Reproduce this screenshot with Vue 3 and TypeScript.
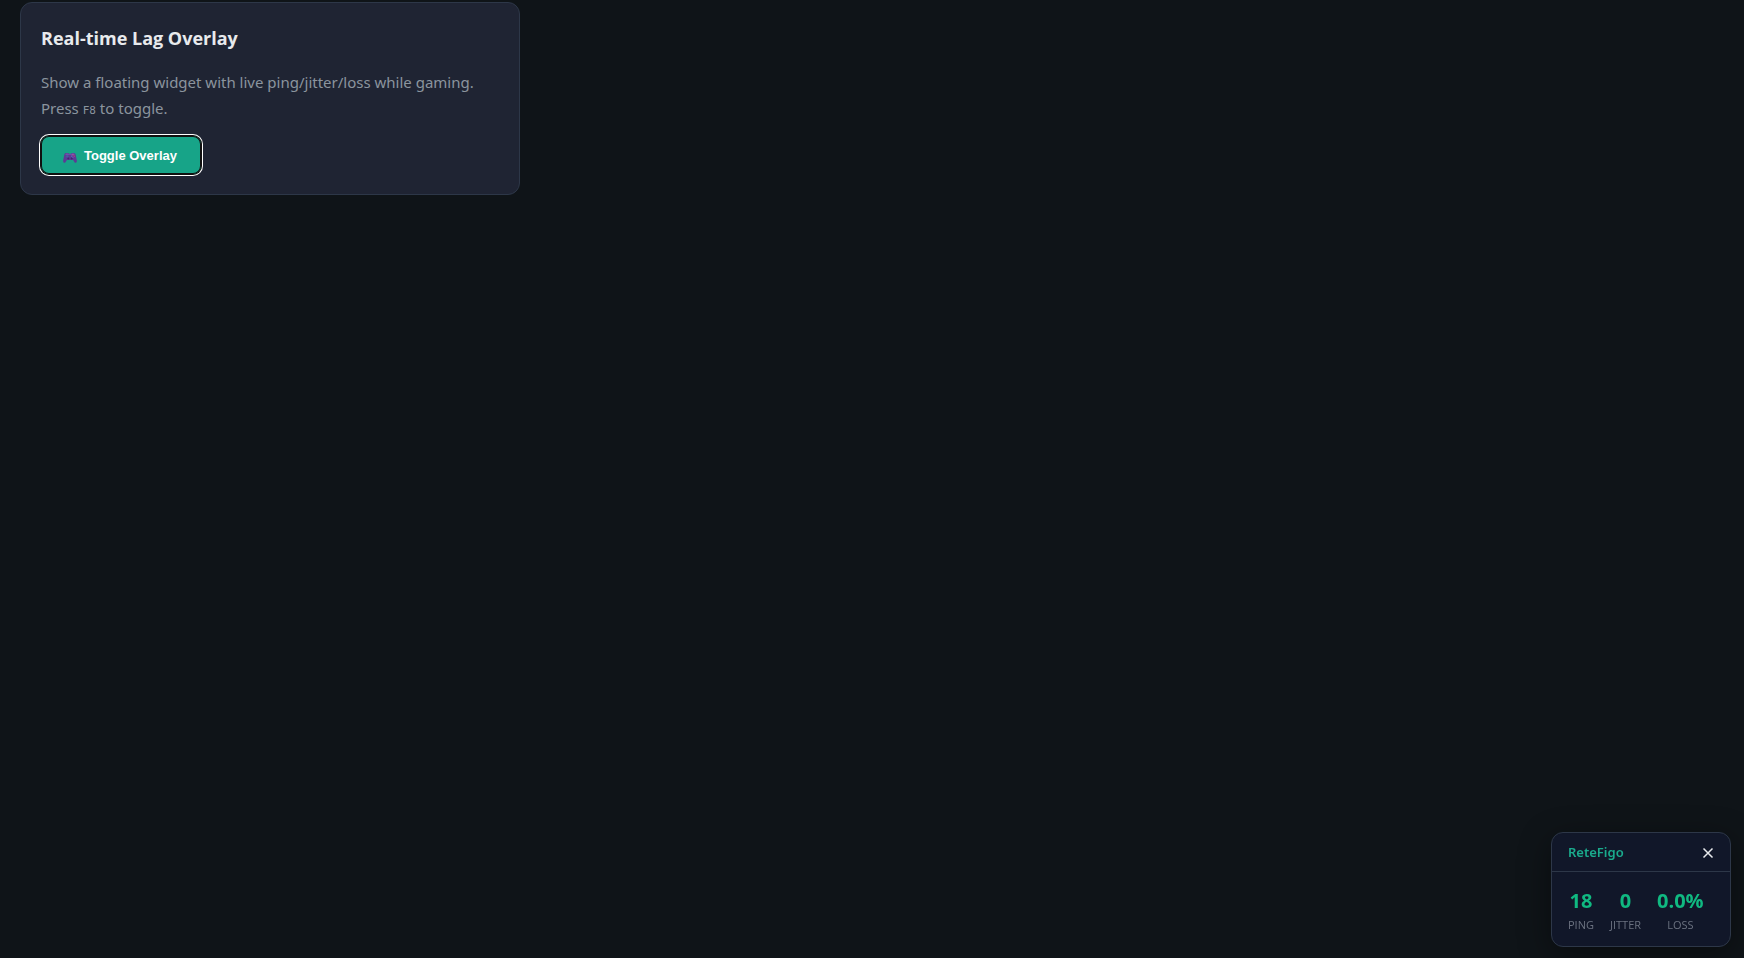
<script setup lang="ts">
import { ref, onMounted, onUnmounted } from 'vue'

interface Metric {
  label: string
  value: string
}

const visible = ref(true)
const metrics: Metric[] = [
  { label: 'PING', value: '18' },
  { label: 'JITTER', value: '0' },
  { label: 'LOSS', value: '0.0%' },
]

function toggle(): void {
  visible.value = !visible.value
}

function onKey(event: KeyboardEvent): void {
  if (event.key === 'F8') toggle()
}

onMounted(() => window.addEventListener('keydown', onKey))
onUnmounted(() => window.removeEventListener('keydown', onKey))
</script>

<template>
  <main class="page">
    <section class="card">
      <h3 class="title">Real-time Lag Overlay</h3>
      <p class="text">
        Show a floating widget with live ping/jitter/loss while gaming.<br />
        Press <kbd class="key">F8</kbd> to toggle.
      </p>
      <button class="toggle" type="button" @click="toggle">
        <svg class="pad" viewBox="0 0 14 12" aria-hidden="true">
          <path
            d="M3 1h2.2l.8.8h2l.8-.8H11c1 0 1.4.7 1.700 1.800l1.100 5.500c.2 1.300-.2 2.300-1 2.400-.8.1-1.300-.5-1.800-1.300L10.200 8H3.800L3 9.400c-.5.8-1 1.400-1.800 1.300-.8-.1-1.200-1.100-1-2.400l1.100-5.500C1.600 1.700 2 1 3 1z"
            fill="#5d3a96"
          />
          <path d="M3 1.500h2l.8.8h2.400l.8-.8h2l.8 1.500H2.200z" fill="#7550ac" />
          <path d="M3.700 2.800h1v1h1v1h-1v1h-1v-1h-1v-1h1z" fill="#46619f" />
          <circle cx="5.300" cy="6.500" r="1" fill="#3c2a70" />
          <circle cx="8.700" cy="6.500" r="1" fill="#3c2a70" />
          <circle cx="9.900" cy="2.900" r=".6" fill="#d05a86" />
          <circle cx="11.300" cy="4.100" r=".6" fill="#e0455e" />
          <circle cx="8.700" cy="4.100" r=".6" fill="#4b8fd0" />
          <circle cx="9.900" cy="5.200" r=".6" fill="#7c5cc0" />
        </svg>
        <span>Toggle Overlay</span>
      </button>
    </section>

    <aside v-if="visible" class="overlay" aria-label="Live connection stats">
      <header class="head">
        <span class="brand">ReteFigo</span>
        <button class="close" type="button" aria-label="Close" @click="visible = false">
          <svg class="cross" viewBox="0 0 12 12" aria-hidden="true">
            <path d="M1.500 1.500l9 9M10.500 1.500l-9 9" fill="none" stroke="currentColor" stroke-width="1.500" />
          </svg>
        </button>
      </header>
      <div class="stats">
        <div v-for="metric in metrics" :key="metric.label" class="stat">
          <span class="value">{{ metric.value }}</span>
          <span class="label">{{ metric.label }}</span>
        </div>
      </div>
    </aside>
  </main>
</template>

<style>
html {
  background: #0f1418;
}
body {
  margin: 0;
}
</style>

<style scoped>
.page {
  box-sizing: border-box;
  min-height: 100vh;
  padding: 2px 20px 20px;
  background: #0f1418;
  font-family: 'Segoe UI', 'Open Sans', 'Noto Sans', sans-serif;
}
.card {
  box-sizing: border-box;
  max-width: 500px;
  padding: 20px;
  border: 1px solid #2d3748;
  border-radius: 12px;
  background: #1f2433;
}
.title {
  margin: 0 0 16px;
  color: #e8eaed;
  font-size: 18px;
  font-weight: 700;
  line-height: 30px;
}
.text {
  margin: 0 0 15px;
  color: #8b949e;
  font-family: 'Segoe UI', 'Noto Sans', sans-serif;
  font-size: 15px;
  line-height: 26px;
}
.key {
  font-family: 'DejaVu Sans Mono', monospace;
  font-size: 11px;
  line-height: 12px;
}
.toggle {
  display: flex;
  align-items: center;
  gap: 7px;
  height: 38px;
  padding: 2px 24px 0 22px;
  border: 0;
  border-radius: 8px;
  background: #17a488;
  box-shadow: inset 0 0 0 1px #101010, 0 0 0 1px #101010, 0 0 0 2px #fff;
  color: #fff;
  font-family: 'Liberation Sans', Arial, sans-serif;
  font-size: 13px;
  font-weight: 700;
  line-height: 16px;
  cursor: pointer;
}
.toggle:focus {
  outline: none;
}
.pad {
  width: 14px;
  height: 12px;
  margin-top: 3px;
}
.overlay {
  position: fixed;
  right: 13px;
  bottom: 11px;
  box-sizing: border-box;
  width: 180px;
  border: 1px solid #2d3748;
  border-radius: 12px;
  background: #111729;
  box-shadow: 0 8px 32px rgba(0, 0, 0, 0.4);
}
.head {
  display: flex;
  align-items: center;
  justify-content: space-between;
  height: 38px;
  padding: 0 16px;
  border-bottom: 1px solid #2d3748;
}
.brand {
  color: #1aab8d;
  font-family: 'Segoe UI', 'Noto Sans', sans-serif;
  font-size: 13px;
  font-weight: 600;
  line-height: 20px;
}
.close {
  display: flex;
  padding: 2px 0 0;
  border: 0;
  background: none;
  color: #e8eaed;
  cursor: pointer;
}
.cross {
  width: 12px;
  height: 12px;
}
.stats {
  display: flex;
  gap: 16px;
  padding: 12px 16px 14px;
}
.stat {
  display: flex;
  flex-direction: column;
  align-items: center;
}
.value {
  color: #10b981;
  font-size: 20px;
  font-weight: 700;
  line-height: 34px;
}
.label {
  color: #6b7280;
  font-size: 11px;
  line-height: 14px;
}
</style>
